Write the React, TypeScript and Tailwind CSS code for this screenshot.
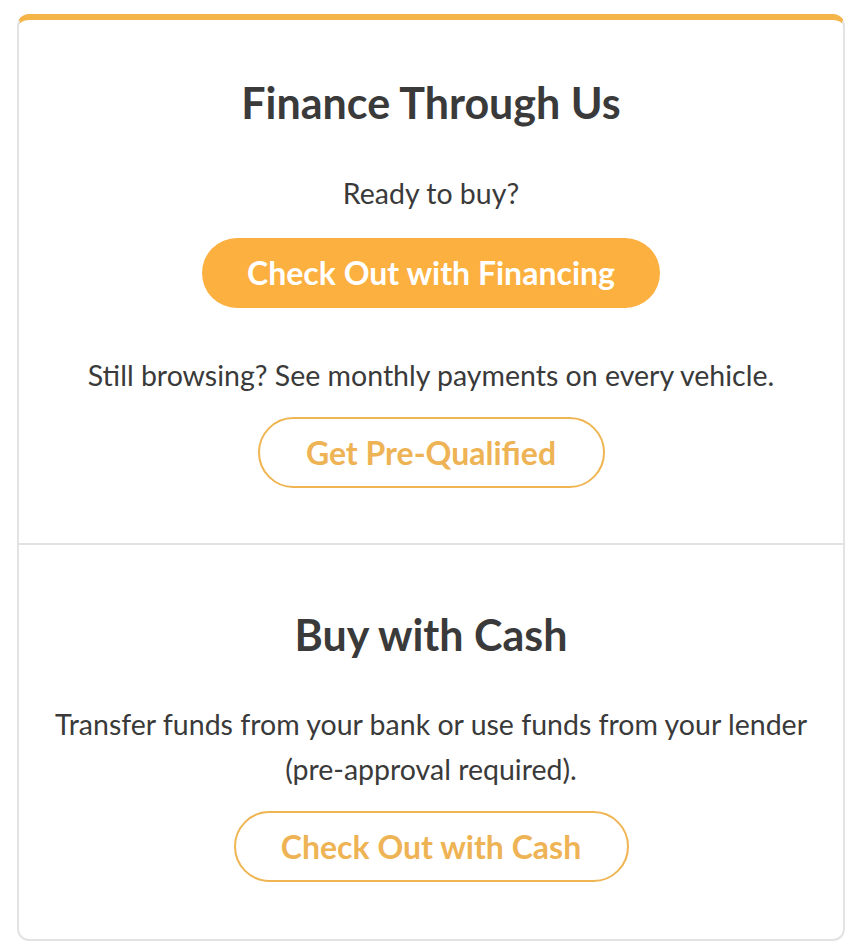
import React from "react";

const font = { fontFamily: "Lato, 'Open Sans', sans-serif" };

function OutlineButton({ label, width }: { label: string; width: string }) {
  return (
    <button
      className={`${width} h-[71px] rounded-full border-2 border-[#efb552] bg-white text-[32px] font-bold text-[#eeb354]`}
    >
      {label}
    </button>
  );
}

export default function App() {
  return (
    <div className="min-h-[948px] bg-white pt-[14px] pl-[17px] pr-[11px] pb-[8px] text-[#3a3a3a]" style={font}>
      <div className="overflow-hidden rounded-[12px] border-2 border-t-[6px] border-[#e3e3e3] border-t-[#f4b448] bg-white">
        <section className="flex flex-col items-center pt-[61px] pb-[55px]">
          <h2 className="text-[43px] font-bold leading-none">Finance Through Us</h2>
          <p className="mt-[55px] text-[28.5px] leading-none">Ready to buy?</p>
          <button className="mt-[30px] h-[70px] w-[458px] rounded-full bg-[#fbb040] text-[32px] font-bold text-white">
            Check Out with Financing
          </button>
          <p className="mt-[53px] text-[28.5px] leading-none">
            Still browsing? See monthly payments on every vehicle.
          </p>
          <div className="mt-[28px]">
            <OutlineButton label="Get Pre-Qualified" width="w-[347px]" />
          </div>
        </section>
        <div className="h-[2px] bg-[#e2e2e2]" />
        <section className="flex flex-col items-center pt-[68px] pb-[57px]">
          <h2 className="text-[43px] font-bold leading-none">Buy with Cash</h2>
          <p className="mt-[46px] text-center text-[28.5px] leading-[45px]">
            Transfer funds from your bank or use funds from your lender
            <br />
            (pre-approval required).
          </p>
          <div className="mt-[19px]">
            <OutlineButton label="Check Out with Cash" width="w-[395px]" />
          </div>
        </section>
      </div>
    </div>
  );
}
